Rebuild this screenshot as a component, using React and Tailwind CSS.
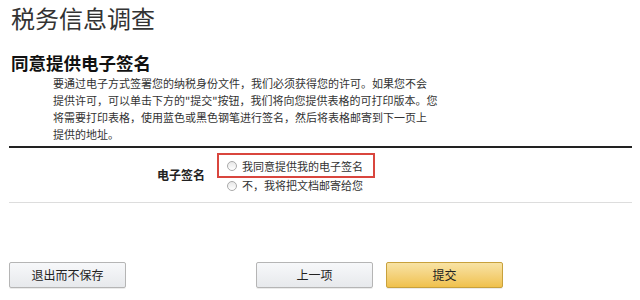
export default function App() {
  return (
    <div className="h-[300px] w-[640px] bg-white px-[9px] text-[#333] font-['Noto_Sans_CJK_SC','Noto_Sans',sans-serif]">
      <h1 className="pt-[2px] pl-[2px] text-[24px] leading-[32px] font-normal text-[#333]">税务信息调查</h1>
      <h2 className="mt-[17px] pl-[2px] text-[17.5px] leading-[24px] font-bold text-[#111]">同意提供电子签名</h2>
      <p className="pl-[44px] text-[11px] leading-[17px] text-[#333]">
        要通过电子方式签署您的纳税身份文件，我们必须获得您的许可。如果您不会
        <br />
        提供许可，可以单击下方的"提交"按钮，我们将向您提供表格的可打印版本。您
        <br />
        将需要打印表格，使用蓝色或黑色钢笔进行签名，然后将表格邮寄到下一页上
        <br />
        提供的地址。
      </p>
      <div className="mt-[3px] h-[2px] w-[623px] bg-[#222]" />
      <div className="flex items-start pt-[5px] pb-[9px]">
        <div className="w-[208px] pt-[14px] pr-[12px] text-right text-[12px] leading-[16px] font-bold text-[#222]">电子签名</div>
        <div className="flex flex-col">
          <label className="flex h-[25px] w-[158px] items-center gap-[5px] border-2 border-[#d9463e] pl-[8px] text-[11px] leading-[16px]">
            <span className="h-[10px] w-[10px] rounded-full border border-[#aaa] bg-gradient-to-b from-[#e8e8e8] to-[#fff]" />
            我同意提供我的电子签名
          </label>
          <label className="flex items-center gap-[5px] pl-[10px] text-[11px] leading-[15px]">
            <span className="h-[10px] w-[10px] rounded-full border border-[#aaa] bg-gradient-to-b from-[#e8e8e8] to-[#fff]" />
            不，我将把文档邮寄给您
          </label>
        </div>
      </div>
      <div className="h-px w-[623px] bg-[#ddd]" />
      <div className="mt-[59px] flex items-center">
        <button className="h-[26px] w-[117px] rounded-[2px] border border-[#b5b5b5] bg-gradient-to-b from-[#f7f8fa] to-[#e7e9ec] text-[12px] text-[#222] shadow-[0_1px_0_rgba(0,0,0,0.08)]">退出而不保存</button>
        <button className="ml-[130px] h-[26px] w-[117px] rounded-[2px] border border-[#b5b5b5] bg-gradient-to-b from-[#f7f8fa] to-[#e7e9ec] text-[12px] text-[#222] shadow-[0_1px_0_rgba(0,0,0,0.08)]">上一项</button>
        <button className="ml-[13px] h-[26px] w-[117px] rounded-[2px] border border-[#c8a13c] bg-gradient-to-b from-[#f8e3a4] to-[#f0c14b] text-[12px] text-[#222] shadow-[0_1px_0_rgba(0,0,0,0.08)]">提交</button>
      </div>
    </div>
  );
}
